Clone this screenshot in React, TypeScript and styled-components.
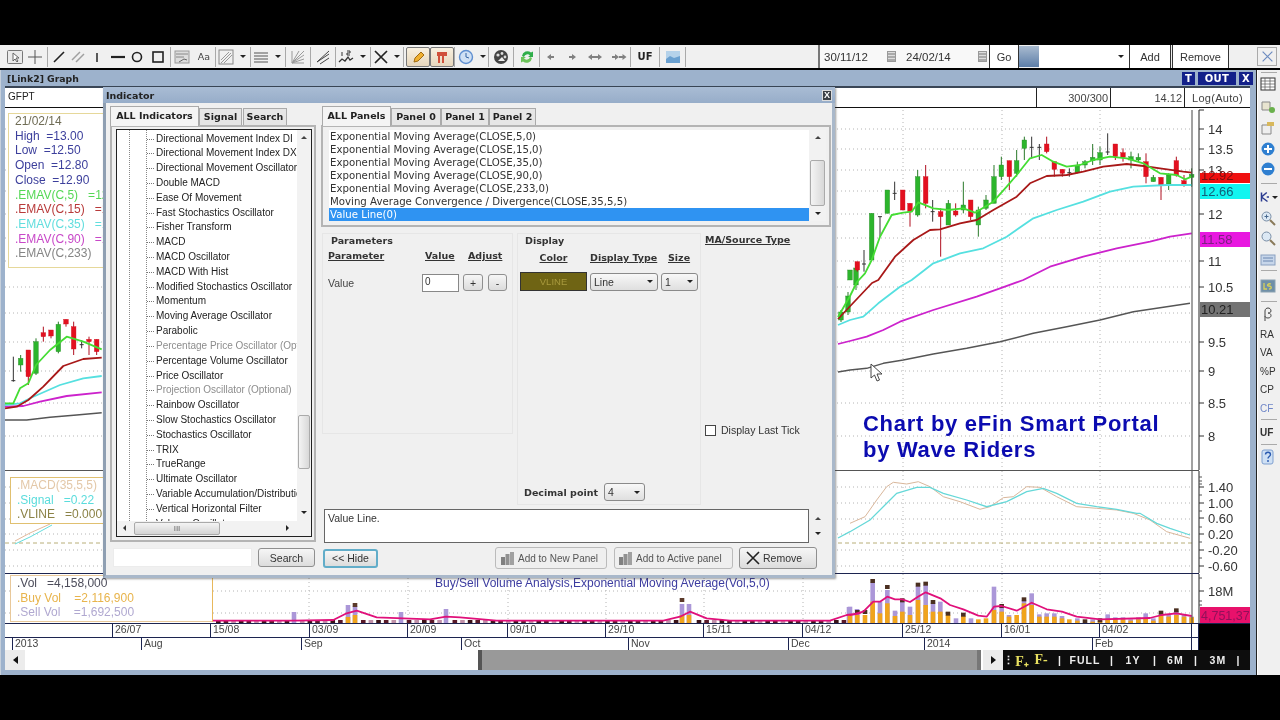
import React from 'react';
import styled, { createGlobalStyle } from 'styled-components';

const Global = createGlobalStyle`
  html, body { margin: 0; padding: 0; background: #000; }
  * { box-sizing: border-box; }
`;
const UI = `"Liberation Sans", Arial, sans-serif`;
const WIDE = `"DejaVu Sans", Verdana, sans-serif`;

const Root = styled.div`
  position: relative; width: 1280px; height: 720px; background: #000; overflow: hidden;
  display: flex; flex-direction: column; font-family: ${UI}; filter: blur(.3px);
`;
const TopBlack = styled.div`height: 45px; flex: none; background: #000;`;
const Toolbar = styled.div`
  height: 23px; flex: none; background: #f0f0f0; display: flex; align-items: center;
  padding-left: 7px; color: #333;
`;
const Tool = styled.div<{ $w: number; $boxed?: boolean }>`
  width: ${p => p.$w}px; height: 20px; flex: none; display: flex; align-items: center; justify-content: center;
  font-size: 10px;
  ${p => p.$boxed ? 'border: 1px solid #777; border-radius: 2px; background: linear-gradient(#f8f0e0,#e6d6bc);' : ''}
`;
const Sep = styled.div`width: 1px; height: 20px; flex: none; background: #a9a9a9;`;
const Caret = styled.div`
  width: 0; height: 0; border-left: 3px solid transparent; border-right: 3px solid transparent; border-top: 3px solid #222;
`;
const BoldTool = styled.span`font: bold 10px ${WIDE}; color: #222;`;
const SmallAa = styled.span`font: 9.5px ${WIDE}; color: #444;`;
const RightGroup = styled.div`display: flex; align-items: stretch; height: 23px; margin-left: auto; flex: none;`;
const DateBox = styled.div<{ $w: number; $bar?: boolean }>`
  width: ${p => p.$w}px; display: flex; align-items: center; justify-content: space-between; padding: 0 ${p => (p.$bar ? 6 : 2)}px 0 4px;
  font: 11.5px ${UI}; color: #333; background: #f8f8f8; ${p => p.$bar ? 'border-left: 2px solid #777;' : ''}
`;
const CalendarMark = styled.div`
  width: 9px; height: 11px; border: 1px solid #999; background: repeating-linear-gradient(#ddd 0 1px, #aaa 1px 3px);
`;
const TopButton = styled.div<{ $w: number }>`
  width: ${p => p.$w}px; background: #fff; border: 1px solid #333; border-width: 0 1px; height: 23px;
  display: flex; align-items: center; justify-content: center; font: 11px ${UI}; color: #333;
`;
const FolderThumb = styled.div`width: 20px; margin: 1px 0; background: linear-gradient(#a9bbd0,#5d7ea8);`;
const PickBox = styled.div`
  width: 90px; background: #fff; display: flex; align-items: center; justify-content: flex-end; padding-right: 5px;
`;
const Gap = styled.div<{ $w: number }>`width: ${p => p.$w}px; flex: none;`;
const CloseTop = styled.div`
  width: 20px; height: 19px; margin: 2px 3px 0 0; border: 1px solid #aaa; color: #6d8cc0; display: flex; align-items: center; justify-content: center;
`;

const Main = styled.div`display: flex; flex: none; height: 607px; border-top: 2px solid #000;`;
const GraphWindow = styled.div`
  width: 1256px; flex: none; background: #9db2cc; display: flex; flex-direction: column;
  padding: 0 6px 5px 5px; height: 605px;
  box-shadow: inset 1px 0 0 #c6d0dc;
`;
const GraphTitle = styled.div`
  height: 16px; flex: none; display: flex; align-items: center; justify-content: space-between; padding: 0 0 0 2px;
  font: bold 9.3px ${WIDE}; color: #222;
`;
const TitleButtons = styled.div`display: flex; gap: 3px; margin-right: -3px;`;
const NavyBtn = styled.div<{ $w: number }>`
  width: ${p => p.$w}px; height: 13px; background: #13218a; color: #fff; font: bold 10px ${WIDE};
  display: flex; align-items: center; justify-content: center; letter-spacing: .4px;
`;
const Content = styled.div`
  width: 1245px; flex: 1; background: #fff; border-top: 2px solid #3a4656; display: flex; flex-direction: column; min-height: 0;
`;
const InfoRow = styled.div`
  height: 20px; flex: none; display: flex; border-bottom: 1px solid #111; font: 11px ${UI}; color: #444; align-items: stretch;
`;
const InfoSymbol = styled.div`flex: 1; padding: 3px 0 0 3px; font-size: 10px; color: #222;`;
const InfoCell = styled.div<{ $w: number; $center?: boolean }>`
  width: ${p => p.$w}px; border-left: 1px solid #222; display: flex; align-items: center;
  justify-content: ${p => (p.$center ? 'center' : 'flex-end')}; padding: 1px 2px 0; font-size: 11px; letter-spacing: ${p => (p.$center ? '.3px' : '0')};
`;
const Pane = styled.div<{ $h: number }>`position: relative; height: ${p => p.$h}px; flex: none;`;
const ChartSvg = styled.svg`display: block; width: 100%; height: 100%;`;
const Legend = styled.div<{ $x: number; $y: number; $w: number; $h: number; $c: string }>`
  position: absolute; left: ${p => p.$x}px; top: ${p => p.$y}px; width: ${p => p.$w}px; height: ${p => p.$h}px;
  border: 1px solid ${p => p.$c}; border-right: 0; background: #fff; padding: 0 0 0 6px; white-space: nowrap; overflow: hidden;
`;
const LegendRow = styled.div<{ $c: string }>`
  font: 12px/14.7px ${UI}; color: ${p => p.$c}; white-space: pre;
`;
const Watermark = styled.div`
  position: absolute; left: 858px; top: 303px; font: bold 22px/26px ${UI}; letter-spacing: .72px; color: #0b0bb0; white-space: pre;
`;
const CursorBox = styled.div`position: absolute; left: 865px; top: 255px; width: 13px; height: 20px;`;
const VolTitle = styled.div`
  position: absolute; left: 430px; top: 2px; font: 12px ${UI}; color: #3c3ca0; white-space: pre;
`;

const AxisBlock = styled.div`display: flex; height: 27px; flex: none; border-top: 1px solid #1c2450;`;
const AxisCols = styled.div`width: 1194px; flex: none; display: flex; flex-direction: column;`;
const AxisRow = styled.div`display: flex; height: 13.5px; flex: none; border-bottom: 1px solid #1c2450; overflow: hidden;`;
const AxisCell = styled.div<{ $w: number }>`
  width: ${p => p.$w}px; flex: none; border-right: 1px solid #1c2450; font: 10.5px/11px ${UI}; color: #444; padding-left: 2px; white-space: nowrap;
`;
const BlackBlock = styled.div`flex: 1; background: #000;`;
const ScrollRow = styled.div`flex: 1; min-height: 0; display: flex; align-items: stretch;`;
const ScrollBtn = styled.div<{ $w: number }>`
  width: ${p => p.$w}px; flex: none; background: #ececec; display: flex; align-items: center; justify-content: center; font-size: 9px; color: #111;
`;
const ArrowL = styled.div`width: 0; height: 0; border: 4px solid transparent; border-right: 5px solid #111; border-left: 0;`;
const ArrowR = styled.div`width: 0; height: 0; border: 4px solid transparent; border-left: 5px solid #111; border-right: 0;`;
const ScrollTrack = styled.div`flex: none; width: 453px; background: #fff;`;
const ScrollThumb = styled.div`
  flex: none; width: 503px; background: #999; border-left: 4px solid #555; border-right: 4px solid #777;
`;
const ScrollGap = styled.div`flex: none; width: 2px; background: #fff;`;
const RangeBar = styled.div`
  flex: 1; background: #0d0d0d; color: #eee; display: flex; align-items: center; font: bold 10.5px ${UI}; letter-spacing: 1.1px;
  overflow: hidden; white-space: nowrap;
`;
const RangeItem = styled.span<{ $w: number; $y?: boolean }>`
  width: ${p => p.$w}px; flex: none; text-align: center; color: ${p => (p.$y ? '#e8e060' : '#eee')};
  ${p => p.$y ? `font: bold 14px "Liberation Serif", serif; letter-spacing: 0;` : ''}
`;

const Sidebar = styled.div`
  flex: 1; background: #f0f0f0; border-left: 1px solid #222; box-shadow: inset 1px 0 0 #fff; height: 605px;
  padding: 2px 0 0 2px; display: flex; flex-direction: column; align-items: stretch;
`;
const SideItem = styled.div<{ $h: number; $blue?: boolean; $bold?: boolean }>`
  height: ${p => p.$h}px; flex: none; display: flex; align-items: center; padding-left: 1px;
  font: ${p => (p.$bold ? 'bold ' : '')}10px ${UI}; color: ${p => (p.$blue ? '#6f86c8' : '#333')};
`;
const SideRule = styled.div<{ $mt?: number }>`height: 1px; flex: none; background: #aaa; margin: ${p => p.$mt || 0}px 3px 0 2px;`;

/* Dialog */
const Dialog = styled.div`
  position: absolute; left: 103px; top: 87px; width: 732px; height: 491px; background: #f0f0f0;
  border: 3px solid #a9b8ca; border-top: 0; border-left-color: #8f9fb2; display: flex; flex-direction: column;
  box-shadow: 1px 1px 2px rgba(60,60,60,.5);
`;
const DialogTitle = styled.div`
  height: 16px; flex: none; margin: 0 -3px; background: linear-gradient(#a9bcd4,#97adc9); display: flex; align-items: center;
  justify-content: space-between; padding: 0 3px 0 3px; font: bold 9.5px ${WIDE}; color: #222;
`;
const DialogClose = styled.div`
  width: 10px; height: 11px; background: #3a3f45; color: #fff; font: bold 9px ${UI}; display: flex; align-items: center; justify-content: center; border: 1px solid #ddd;
`;
const DialogBody = styled.div`display: flex; gap: 5px; padding: 3px 1px 0 4px; flex: 1; min-height: 0;`;
const LeftCol = styled.div`width: 206px; flex: none; display: flex; flex-direction: column;`;
const RightCol = styled.div`width: 510px; flex: none; display: flex; flex-direction: column;`;
const Tabs = styled.div<{ $ml?: number }>`display: flex; height: 19px; flex: none; align-items: flex-end; margin-left: ${p => p.$ml || 0}px;`;
const Tab = styled.div<{ $w: number; $active?: boolean }>`
  width: ${p => p.$w}px; height: ${p => (p.$active ? 20 : 17)}px; flex: none; font: bold 9.5px ${WIDE}; color: #222;
  background: ${p => (p.$active ? '#f4f4f4' : '#e6e6e6')}; border: 1px solid #aaa; border-bottom: 0;
  display: flex; align-items: center; justify-content: center; position: relative; z-index: ${p => (p.$active ? 1 : 0)};
  padding-bottom: ${p => (p.$active ? 3 : 1)}px;
  ${p => p.$active ? 'margin-bottom: -1px;' : ''}
`;
const TabPanel = styled.div`
  height: 417px; flex: none; border: 2px solid #b4b4b4; padding: 2px 2px 3px 4px;
`;
const TreeBox = styled.div`
  height: 100%; border: 1px solid #222; background: #fff; display: grid; grid-template-columns: 1fr 14px; grid-template-rows: 1fr 15px; overflow: hidden;
`;
const TreeList = styled.div`
  overflow: hidden; padding-top: 1.5px; min-height: 0;
  background:
    repeating-linear-gradient(#888 0 1px, transparent 1px 2px) 12px 0 / 1px 100% no-repeat,
    repeating-linear-gradient(#888 0 1px, transparent 1px 2px) 29px 0 / 1px 100% no-repeat;
`;
const TreeRow = styled.div<{ $off?: boolean }>`
  height: 14.82px; padding-left: 39px; position: relative; white-space: nowrap; overflow: hidden;
  font: 10px/14.82px ${UI}; color: ${p => (p.$off ? '#8d8d8d' : '#222')};
  &::before {
    content: ''; position: absolute; left: 30px; top: 7px; width: 7px; border-top: 1px dotted #777;
  }
`;
const VScroll = styled.div<{ $off: number; $thumb: number }>`
  position: relative; background: #f2f2f2;
  &::after {
    content: ''; position: absolute; left: 1px; right: 1px; top: ${p => p.$off}px; height: ${p => p.$thumb}px;
    border: 1px solid #aaa; border-radius: 2px; background: linear-gradient(90deg,#f4f4f4,#d8d8d8);
  }
`;
const ArrowUp = styled.div<{ $top: number }>`
  position: absolute; left: 50%; top: ${p => p.$top}px; margin-left: -3px; width: 0; height: 0;
  border: 3px solid transparent; border-bottom: 3px solid #444; border-top: 0;
`;
const ArrowDown = styled.div<{ $bottom: number }>`
  position: absolute; left: 50%; bottom: ${p => p.$bottom}px; margin-left: -3px; width: 0; height: 0;
  border: 3px solid transparent; border-top: 3px solid #222; border-bottom: 0;
`;
const HScroll = styled.div`position: relative; background: #f2f2f2; display: flex; align-items: center;`;
const HThumb = styled.div`
  margin-left: 17px; width: 86px; height: 13px; border: 1px solid #aaa; border-radius: 2px; background: linear-gradient(#f4f4f4,#d4d4d4);
  display: flex; align-items: center; justify-content: center; font: 8px ${UI}; color: #666;
`;
const ArrowLeftSm = styled.div`position: absolute; left: 6px; top: 4px; width: 0; height: 0; border: 3px solid transparent; border-right: 3px solid #333; border-left: 0;`;
const ArrowRightSm = styled.div`position: absolute; right: 8px; top: 4px; width: 0; height: 0; border: 3px solid transparent; border-left: 3px solid #222; border-right: 0;`;
const Corner = styled.div`background: #f2f2f2;`;
const SearchRow = styled.div`display: flex; align-items: center; margin-top: 6px; padding-left: 3px;`;
const SearchInput = styled.div`width: 139px; height: 19px; background: #fff; border: 1px solid #ececec;`;
const Btn = styled.div<{ $w: number; $h?: number; $ml?: number; $focus?: boolean; $dim?: boolean; $pl?: number }>`
  width: ${p => p.$w}px; height: ${p => p.$h || 19}px; margin-left: ${p => p.$ml || 0}px; flex: none;
  border: ${p => (p.$focus ? '2px solid #62adc9' : '1px solid ' + (p.$dim ? '#bbb' : '#8f8f8f'))}; border-radius: 3px;
  background: ${p => p.$dim ? '#efefef' : 'linear-gradient(#f6f6f6,#dcdcdc)'};
  display: flex; align-items: center; justify-content: ${p => (p.$pl ? 'flex-start' : 'center')}; gap: 2px; padding-left: ${p => p.$pl || 0}px;
  font: ${p => (p.$dim ? 10 : 10.5)}px ${UI}; color: ${p => (p.$dim ? '#555' : '#333')}; white-space: nowrap;
`;
const ListPanel = styled.div`
  height: 102px; flex: none; border: 2px solid #b4b4b4; padding: 3px 3px 4px 6px;
`;
const ListBox = styled.div`height: 91px; background: #fff; display: grid; grid-template-columns: 1fr 17px;`;
const ListRows = styled.div`overflow: hidden;`;
const ListRow = styled.div<{ $sel?: boolean }>`
  height: 13px; font: 10.2px/14px ${WIDE}; padding-left: 1px; white-space: pre;
  color: ${p => (p.$sel ? '#fff' : '#333')}; background: ${p => (p.$sel ? '#2f93f2' : 'transparent')};
`;
const Sections = styled.div`display: flex; gap: 4px; height: 272px; flex: none; margin: 6px 0 0 1px;`;
const Group = styled.div<{ $w: number; $h: number }>`
  width: ${p => p.$w}px; height: ${p => p.$h}px; flex: none; border: 1px solid #e6e6e6; display: flex; flex-direction: column;
`;
const GroupTitle = styled.div<{ $pl: number }>`
  font: bold 9.5px/13px ${WIDE}; color: #333; padding: 0 0 0 ${p => p.$pl}px; height: 13px;
`;
const HeadRow = styled.div<{ $mt: number; $pl: number }>`display: flex; margin-top: ${p => p.$mt}px; padding-left: ${p => p.$pl}px; height: 13px;`;
const Head = styled.div<{ $w: number; $center?: boolean }>`
  width: ${p => p.$w}px; flex: none; font: bold 9.5px/13px ${WIDE}; color: #333; text-decoration: underline; white-space: nowrap;
  ${p => p.$center ? 'text-align: center;' : ''}
`;
const ParamRow = styled.div<{ $mt: number; $pl: number }>`
  display: flex; align-items: center; margin-top: ${p => p.$mt}px; padding-left: ${p => p.$pl}px; height: 19px;
`;
const ParamLabel = styled.div`width: 94px; flex: none; font: 10.5px ${UI}; color: #444;`;
const ValueInput = styled.div`
  width: 37px; height: 18px; flex: none; background: #fff; border: 1px solid #888; font: 10px/14px ${UI}; color: #333; padding-left: 2px;
`;
const Swatch = styled.div`
  width: 67px; height: 19px; flex: none; background: #6f6414; border: 1px solid #333; font: 9.5px/17px ${UI}; color: #a8993d; text-align: center;
`;
const Select = styled.div<{ $w: number; $ml?: number }>`
  width: ${p => p.$w}px; height: 18px; flex: none; margin-left: ${p => p.$ml || 0}px; border: 1px solid #8a8a8a; border-radius: 3px;
  background: linear-gradient(#f8f8f8,#dfdfdf); display: flex; align-items: center; justify-content: space-between; padding: 0 4px 0 3px;
  font: 10.5px ${UI}; color: #333;
`;
const DecimalRow = styled.div`display: flex; align-items: center; margin-top: auto; padding: 0 0 3px 6px; font: bold 9.5px ${WIDE}; color: #333;`;
const DecimalLabel = styled.div`width: 80px; flex: none;`;
const MaCol = styled.div`flex: 1; display: flex; flex-direction: column;`;
const MaTitle = styled.div`font: bold 9.5px/13px ${WIDE}; color: #333; text-decoration: underline;`;
const CheckRow = styled.div`display: flex; align-items: center; gap: 5px; margin-top: 178px; font: 10.5px ${UI}; color: #333;`;
const CheckBox = styled.div`width: 11px; height: 11px; background: #fff; border: 1px solid #444;`;
const DescRow = styled.div`display: flex; margin: 4px 0 0 3px; height: 34px; flex: none;`;
const DescBox = styled.div`width: 485px; flex: none; background: #fff; border: 1px solid #666; padding: 2px 3px; font: 10.5px ${UI}; color: #333;`;
const DescScroll = styled.div`width: 17px; position: relative;`;
const ActionRow = styled.div`display: flex; align-items: center; margin: 4px 0 0 2px; height: 22px; flex: none;`;

type P = [number, number];
const map = (ox: number, oy: number, pts: P[]) => pts.map(([x, y]) => `${(ox + x / 3).toFixed(1)},${(oy + y / 3).toFixed(1)}`).join(' ');
const page = (pts: P[]) => pts.map(p => p.join(',')).join(' ');

const greenR = page([[838, 317], [850, 296], [857, 282]]) + ' ' + map(850, 40, [[45, 700], [65, 660], [90, 590], [125, 525], [160, 518], [185, 515], [205, 487], [250, 505], [295, 510], [340, 505], [375, 518], [430, 485], [470, 440], [500, 405], [540, 355], [575, 345], [610, 365], [650, 380], [690, 375], [730, 360], [780, 350], [830, 355], [880, 370], [930, 400], [980, 405], [1005, 418], [1025, 410]]);
const redR = page([[838, 319], [855, 301], [872, 283]]) + ' ' + map(850, 40, [[85, 720], [135, 650], [190, 600], [240, 570], [270, 568], [330, 550], [380, 540], [430, 510], [500, 470], [540, 430], [590, 408], [650, 405], [700, 395], [760, 380], [830, 372], [880, 378], [930, 385], [1000, 395], [1025, 398]]);
const cyanR = page([[838, 325]]) + ' ' + map(850, 280, [[0, 120], [40, 110], [85, 70], [150, 20], [185, 0]]) + ' ' + map(850, 40, [[250, 670], [330, 640], [400, 625], [470, 590], [550, 535], [620, 510], [700, 485], [780, 455], [850, 440], [950, 435], [1025, 435]]);
const magR = page([[838, 344]]) + ' ' + map(850, 280, [[0, 183], [50, 170], [100, 150], [150, 125], [250, 90], [380, 50], [450, 25], [520, 0]]) + ' ' + map(850, 40, [[600, 680], [700, 650], [800, 625], [900, 605], [960, 590], [1025, 580]]);
const grayR = page([[838, 372]]) + ' ' + map(850, 280, [[0, 270], [50, 265], [100, 250], [160, 240], [250, 222], [350, 205], [450, 185], [550, 160], [650, 140], [750, 120], [850, 95], [950, 80], [1020, 70]]);
const greenL = map(0, 280, [[15, 370], [40, 370], [60, 325], [85, 310], [108, 255], [150, 210], [200, 170], [250, 185], [305, 208]]);
const redL = map(0, 280, [[15, 385], [50, 380], [85, 360], [130, 320], [190, 258], [250, 237], [305, 233]]);
const cyanL = map(0, 280, [[15, 375], [60, 370], [100, 350], [180, 315], [250, 295], [305, 288]]);
const magL = map(0, 280, [[15, 380], [70, 378], [120, 365], [200, 348], [305, 337]]);
const grayL = map(0, 280, [[15, 420], [80, 420], [150, 412], [230, 405], [305, 398]]);

type C = [number, number, number, number, number, 'g' | 'r' | 'k'];
const candlesR: C[] = [
  [0, 690, 720, 690, 720, 'g'], [22, 665, 695, 665, 690, 'r'], [42, 630, 695, 672, 675, 'k'],
  [65, 520, 660, 520, 660, 'g'], [90, 530, 590, 530, 532, 'k'], [112, 450, 520, 450, 520, 'g'], [134, 425, 480, 460, 463, 'k'],
  [158, 450, 510, 450, 510, 'r'], [180, 490, 560, 490, 515, 'r'], [203, 390, 530, 410, 525, 'g'], [227, 375, 505, 410, 490, 'r'],
  [248, 480, 545, 515, 518, 'k'], [272, 505, 650, 515, 530, 'r'], [295, 480, 555, 490, 555, 'g'], [317, 490, 530, 513, 525, 'r'],
  [340, 425, 520, 495, 510, 'g'], [362, 480, 540, 480, 530, 'r'], [385, 500, 590, 510, 555, 'g'], [408, 465, 510, 480, 505, 'g'],
  [432, 375, 490, 410, 490, 'g'], [454, 350, 420, 375, 410, 'g'], [478, 362, 450, 362, 410, 'r'], [500, 330, 410, 362, 400, 'g'],
  [523, 290, 360, 300, 325, 'g'], [545, 290, 355, 322, 325, 'k'], [568, 312, 360, 322, 325, 'k'], [590, 290, 340, 312, 335, 'r'],
  [613, 365, 410, 365, 388, 'r'], [637, 388, 410, 388, 400, 'r'], [658, 385, 410, 398, 401, 'k'], [682, 365, 400, 378, 398, 'g'],
  [705, 360, 385, 365, 375, 'g'], [728, 312, 375, 352, 362, 'g'], [750, 320, 375, 338, 360, 'g'], [773, 280, 345, 336, 339, 'k'],
  [796, 312, 360, 312, 350, 'r'], [819, 325, 365, 338, 352, 'r'], [843, 335, 385, 350, 360, 'g'], [865, 340, 365, 352, 360, 'g'],
  [888, 340, 430, 365, 410, 'r'], [910, 405, 425, 412, 425, 'g'], [933, 412, 480, 412, 435, 'r'], [956, 400, 450, 405, 432, 'g'],
  [979, 350, 410, 362, 405, 'r'], [1002, 405, 440, 422, 432, 'r'], [1025, 385, 440, 403, 412, 'g'],
];
const candlesFar: C[] = [
  [841, 310, 322, 312, 320, 'g'], [848, 292, 315, 296, 312, 'g'], [856, 262, 290, 268, 285, 'g'],
];
const candlesL: C[] = [
  [40, 230, 305, 302, 305, 'k'], [62, 225, 275, 235, 255, 'g'], [85, 210, 315, 210, 290, 'r'], [108, 175, 285, 185, 280, 'g'],
  [130, 140, 185, 158, 170, 'r'], [153, 150, 175, 150, 168, 'r'], [175, 125, 220, 133, 215, 'g'], [198, 118, 140, 118, 132, 'r'],
  [221, 125, 225, 140, 207, 'r'], [245, 180, 205, 194, 197, 'k'], [267, 170, 225, 178, 185, 'r'], [290, 178, 225, 178, 215, 'r'],
];
const Candle: React.FC<{ c: C; ox: number; oy: number }> = ({ c, ox, oy }) => {
  const [x0, wt, wb, bt, bb, k] = c;
  const x = ox + x0 / 3;
  const col = k === 'g' ? '#2cb52c' : k === 'r' ? '#e3101f' : '#222';
  const wick = k === 'g' ? '#2a7a2a' : k === 'r' ? '#b01020' : '#333';
  return (
    <g>
      <line x1={x} x2={x} y1={oy + wt / 3} y2={oy + wb / 3} stroke={wick} strokeWidth={1} />
      {k === 'k'
        ? <line x1={x - 2} x2={x + 2} y1={oy + bt / 3} y2={oy + bt / 3} stroke="#333" />
        : <rect x={x - 2.3} y={oy + bt / 3} width={4.6} height={Math.max(1, (bb - bt) / 3)} fill={col} stroke={k === 'g' ? '#2a8a2a' : '#d01020'} strokeWidth={.4} />}
    </g>
  );
};
const Grid: React.FC<{ ys: number[]; y1: number; y2: number; xs: number[] }> = ({ ys, y1, y2, xs }) => (
  <g stroke="#b4b4b4" strokeDasharray="1 3">
    {ys.map(y => <line key={y} x1={5} x2={1192} y1={y} y2={y} />)}
    {xs.map(x => <line key={x} x1={x} x2={x} y1={y1} y2={y2} />)}
  </g>
);
const Line: React.FC<{ pts: string; c: string; w?: number }> = ({ pts, c, w = 1.8 }) => (
  <polyline points={pts} fill="none" stroke={c} strokeWidth={w} strokeLinejoin="round" />
);
const Tag: React.FC<{ y: number; h: number; bg: string; fg: string; t: string; fs?: number }> = ({ y, h, bg, fg, t, fs = 13 }) => (
  <g>
    <rect x={1200} y={y} width={50} height={h} fill={bg} />
    <text x={1201} y={y + h - 3} fontSize={fs} fill={fg} fontFamily={UI}>{t}</text>
  </g>
);
const Tick: React.FC<{ y: number; t: string }> = ({ y, t }) => (
  <g>
    <line x1={1199} x2={1204} y1={y} y2={y} stroke="#333" />
    <text x={1208} y={y + 4.5} fontSize={13} fill="#333" fontFamily={UI}>{t}</text>
  </g>
);

const PricePane = () => (
  <ChartSvg viewBox="5 108 1245 363" preserveAspectRatio="none">
    <Grid ys={[129, 149, 170, 191, 214, 238, 261, 287, 313, 342, 371, 403, 436]} y1={110} y2={470} xs={[903, 1002, 1100]} />
    {candlesL.map((c, i) => <Candle key={i} c={c} ox={0} oy={280} />)}
    <Line pts={grayL} c="#555" w={1.4} />
    <Line pts={magL} c="#cc22cc" />
    <Line pts={cyanL} c="#55e0e0" />
    <Line pts={redL} c="#a81818" />
    <Line pts={greenL} c="#44dd33" />
    {candlesFar.map((c, i) => <Candle key={'f' + i} c={[(c[0] - 838) * 3, (c[1] - 40) * 3, (c[2] - 40) * 3, (c[3] - 40) * 3, (c[4] - 40) * 3, c[5]]} ox={838} oy={40} />)}
    {candlesR.map((c, i) => <Candle key={i} c={c} ox={850} oy={40} />)}
    <Line pts={grayR} c="#555" w={1.4} />
    <Line pts={magR} c="#cc22cc" />
    <Line pts={cyanR} c="#55e0e0" />
    <Line pts={redR} c="#a81818" />
    <Line pts={greenR} c="#44dd33" />
    <line x1={1192} x2={1192} y1={110} y2={470} stroke="#444" />
    <line x1={1199} x2={1199} y1={110} y2={470} stroke="#222" />
    <line x1={1199} x2={1204} y1={110} y2={110} stroke="#333" />
    {[['14', 129], ['13.5', 149], ['13', 170], ['12', 214], ['11', 261], ['10.5', 287], ['9.5', 342], ['9', 371], ['8.5', 403], ['8', 436]].map(([t, y]) => <Tick key={t as string} y={y as number} t={t as string} />)}
    <Tag y={173} h={10} bg="#f01010" fg="#7a1010" t="12.92" />
    <Tag y={184} h={15} bg="#12f5f0" fg="#11607a" t="12.66" />
    <Tag y={232} h={15} bg="#e818e0" fg="#7a2080" t="11.58" />
    <Tag y={302} h={15} bg="#737373" fg="#222" t="10.21" />
    <line x1={5} x2={1199} y1={470.5} y2={470.5} stroke="#555" />
  </ChartSvg>
);

const tanR = map(850, 500, [[0, 70], [45, 50], [80, 0]]) + ' ' + map(850, 280, [[110, 620], [130, 607], [170, 612], [205, 605], [240, 620], [280, 650], [330, 665], [390, 688], [420, 680], [460, 653], [490, 650], [530, 620], [570, 622], [620, 650], [680, 680], [740, 685], [800, 690], [850, 700], [900, 720]]) + ' ' + map(850, 500, [[950, 95], [1020, 115]]);
const cyMacd = page([[838, 538]]) + ' ' + map(850, 500, [[0, 95], [60, 60], [120, 0]]) + ' ' + map(850, 280, [[140, 640], [200, 622], [240, 622], [280, 640], [350, 660], [410, 680], [470, 665], [530, 635], [580, 625], [620, 640], [680, 670], [740, 680], [800, 688], [860, 700]]) + ' ' + map(850, 500, [[870, 40], [920, 70], [960, 85], [1020, 105]]);

const MacdPane = () => (
  <ChartSvg viewBox="5 471 1245 103" preserveAspectRatio="none">
    <Grid ys={[487, 503, 519, 534, 550, 566]} y1={471} y2={573} xs={[903, 1002, 1100]} />
    <line x1={5} x2={1192} y1={543} y2={543} stroke="#b8ae78" strokeDasharray="4 3" />
    <polyline points="15,541 30,533 50,524" fill="none" stroke="#e3b99b" />
    <polyline points="15,544 30,537 52,525" fill="none" stroke="#66dddd" />
    <polyline points={tanR} fill="none" stroke="#d9b79b" />
    <polyline points={cyMacd} fill="none" stroke="#66d8d8" strokeWidth={1.3} />
    <line x1={1192} x2={1192} y1={471} y2={573} stroke="#444" />
    <line x1={1199} x2={1199} y1={471} y2={573} stroke="#222" />
    {[477, 481, 484, 495, 511, 527, 542, 558].map(y => <line key={y} x1={1199} x2={1202} y1={y} y2={y} stroke="#555" />)}
    {[['1.40', 487], ['1.00', 503], ['0.60', 518], ['0.20', 534], ['-0.20', 550], ['-0.60', 566]].map(([t, y]) => <Tick key={t as string} y={y as number} t={t as string} />)}
    <line x1={5} x2={1199} y1={573.5} y2={573.5} stroke="#1c2450" />
  </ChartSvg>
);

type V = [number, number, number?, number?];
const volR: V[] = [[0, 345, 320], [22, 345, 0, 330], [45, 345, 0, 330], [68, 305, 248, 237], [90, 340, 305], [112, 310, 270, 255], [135, 348, 332], [157, 335, 305, 295], [180, 345, 320], [204, 300, 258, 248], [227, 315, 255, 245], [249, 335, 308, 300], [271, 335, 305], [294, 345, 0, 335], [318, 0, 355], [340, 348, 0, 338], [363, 0, 355], [385, 358], [408, 355], [432, 330, 260], [455, 335, 320, 312], [477, 350, 345], [500, 345], [522, 310, 300, 292], [545, 315, 280], [568, 350, 343], [590, 350, 340], [613, 350, 340], [636, 355, 348], [658, 358], [682, 362, 355], [705, 0, 0, 358], [728, 365, 358], [750, 362, 0, 355], [773, 358, 343], [796, 358, 352], [819, 358, 352], [842, 362, 358], [865, 358, 352], [887, 355, 340], [910, 362, 355], [933, 345, 340, 332], [956, 350, 345], [979, 345, 333, 325], [1002, 350, 345], [1025, 352, 350]];
const specials: [number, number, number?, number?][] = [
  [294, 0, 612], [348, 617, 605, 0], [355, 615, 606, 603], [401, 0, 612], [446, 0, 609], [682, 615, 604, 598], [689, 615, 604], [849, 0, 607], [857, 0, 609, 0],
];
const lowBars: number[] = [];
for (let x = 216; x < 848; x += 7.63) lowBars.push(x);
const pinkLine = map(210, 500, [[0, 362]]) + ' ' + map(0, 500, [[880, 362], [1000, 360], [1040, 340], [1070, 332], [1130, 352], [1290, 358]]) + ' ' + map(430, 500, [[48, 350], [90, 352], [200, 362], [700, 362], [750, 350], [780, 335], [830, 355], [900, 362], [1200, 362], [1250, 345], [1290, 340]]) + ' ' + map(850, 500, [[0, 345], [40, 335], [70, 305], [90, 305], [112, 290], [135, 298], [157, 298], [180, 306], [204, 290], [227, 277], [271, 295], [300, 315], [340, 328], [385, 347], [410, 350], [432, 320], [455, 318], [500, 332], [545, 308], [590, 328], [636, 335], [680, 350], [750, 358], [900, 354], [935, 345], [979, 340], [1025, 348]]);

const VolPane = () => (
  <ChartSvg viewBox="5 574 1245 49" preserveAspectRatio="none">
    <Grid ys={[591, 613]} y1={574} y2={623} xs={[309, 408, 508, 606, 704, 803, 903, 1002, 1100]} />
    {lowBars.map((x, i) => {
      const specialHit = specials.some(s => Math.abs(s[0] - x) < 3.8);
      if (specialHit) return null;
      const c = i % 3 === 0 ? '#3b1218' : i % 3 === 1 ? '#5a1a2a' : '#c090a8';
      return <rect key={i} x={x} y={620} width={4.6} height={3} fill={c} />;
    })}
    {specials.map(([x, o, p, d], i) => (
      <g key={i}>
        {!!p && <rect x={x - 2.3} y={p} width={4.6} height={623 - p} fill="#ab97d8" />}
        {!!o && <rect x={x - 2.3} y={o} width={4.6} height={623 - o} fill="#f0a41c" />}
        {!!d && <rect x={x - 2.3} y={d} width={4.6} height={4} fill="#5b3a2a" />}
      </g>
    ))}
    {volR.map(([zx, o, p, d], i) => {
      const x = 850 + zx / 3 - 2.3;
      const Y = (z: number) => 500 + z / 3;
      return (
        <g key={i}>
          {!!p && <rect x={x} y={Y(p)} width={4.6} height={623 - Y(p)} fill="#ab97d8" />}
          {!!o && <rect x={x} y={Y(o)} width={4.6} height={623 - Y(o)} fill="#f0a41c" />}
          {!!d && <rect x={x} y={Y(d)} width={4.6} height={4} fill="#4a2f20" />}
        </g>
      );
    })}
    <polyline points={pinkLine} fill="none" stroke="#e0107a" strokeWidth={1.8} strokeLinejoin="round" />
    <line x1={212.5} x2={212.5} y1={574} y2={622} stroke="#e8b85c" />
    <line x1={1192} x2={1192} y1={574} y2={623} stroke="#444" />
    <line x1={1199} x2={1199} y1={574} y2={623} stroke="#222" />
    {[578, 601, 605].map(y => <line key={y} x1={1199} x2={1202} y1={y} y2={y} stroke="#555" />)}
    <Tick y={591} t="18M" />
    <Tag y={607} h={16} bg="#e8116b" fg="#92105a" t="4,751,379" fs={12.5} />
  </ChartSvg>
);

const Ico: React.FC<{ children: React.ReactNode; s?: number }> = ({ children, s = 16 }) => (
  <svg width={s} height={s} viewBox="0 0 16 16" fill="none">{children}</svg>
);

const toolbarItems: React.ReactNode[] = [
  <Tool $w={16} key="select"><Ico><rect x=".5" y="1.5" width="15" height="13" rx="1" stroke="#777" fill="#eaeaea" /><path d="M6 4l0 8 2-2 2 3 1-1-2-3 3 0z" stroke="#666" fill="#fff" /></Ico></Tool>,
  <Tool $w={24} key="plus"><Ico><path d="M8 1v14M1 8h14" stroke="#555" /></Ico></Tool>,
  <Sep key="s1" />,
  <Tool $w={22} key="diag"><Ico><path d="M3 13L13 3" stroke="#222" strokeWidth="1.6" /></Ico></Tool>,
  <Tool $w={16} key="dbl"><Ico><path d="M2 11L10 3M6 13l8-8" stroke="#a0a0a0" strokeWidth="1.5" /></Ico></Tool>,
  <Tool $w={22} key="bar"><Ico><path d="M8 4v9" stroke="#333" strokeWidth="1.6" /></Ico></Tool>,
  <Tool $w={20} key="thick"><Ico><path d="M1 8h14" stroke="#222" strokeWidth="2.2" /></Ico></Tool>,
  <Tool $w={18} key="circ"><Ico><circle cx="8" cy="8" r="4.5" stroke="#222" strokeWidth="1.6" /></Ico></Tool>,
  <Tool $w={24} key="sq"><Ico><rect x="3" y="3" width="10" height="10" stroke="#222" strokeWidth="1.6" /></Ico></Tool>,
  <Sep key="s2" />,
  <Tool $w={22} key="note"><Ico><rect x="1" y="2" width="14" height="12" fill="#ddd" stroke="#999" /><path d="M2 5h12M2 8h8" stroke="#888" /><path d="M5 13l5-3 3 1" stroke="#666" /></Ico></Tool>,
  <Tool $w={22} key="aa"><SmallAa>Aa</SmallAa></Tool>,
  <Sep key="s3" />,
  <Tool $w={20} key="pat"><Ico><rect x="1" y="1" width="14" height="14" stroke="#888" /><path d="M3 11l8-8M3 14l10-10M6 14l8-8" stroke="#999" /></Ico></Tool>,
  <Tool $w={14} key="c1"><Caret /></Tool>,
  <Sep key="s4" />,
  <Tool $w={20} key="lines"><Ico><path d="M1 4h14M1 7h14M1 10h14M1 13h14" stroke="#555" /></Ico></Tool>,
  <Tool $w={14} key="c2"><Caret /></Tool>,
  <Sep key="s5" />,
  <Tool $w={24} key="fan"><Ico><path d="M2 14L14 2M2 14L14 6M2 14L14 10M2 14L9 2" stroke="#9a9a9a" /><path d="M2 2v12h12" stroke="#999" /></Ico></Tool>,
  <Sep key="s6" />,
  <Tool $w={24} key="fan2"><Ico><path d="M2 13L14 2M2 13L14 5M5 15L14 9" stroke="#444" /></Ico></Tool>,
  <Sep key="s7" />,
  <Tool $w={20} key="wave"><Ico><path d="M1 13l3-3 3 2 3-4 2 3 3-2" stroke="#333" strokeWidth="1.3" /><path d="M4 3v4M9 2h3v2h-3v2h3" stroke="#333" /></Ico></Tool>,
  <Tool $w={14} key="c3"><Caret /></Tool>,
  <Sep key="s8" />,
  <Tool $w={20} key="x"><Ico><path d="M2 2l12 12M14 2L2 14" stroke="#222" strokeWidth="1.7" /></Ico></Tool>,
  <Tool $w={12} key="c4"><Caret /></Tool>,
  <Sep key="s9" />,
  <Gap $w={2} key="g1" />,
  <Tool $w={24} $boxed key="pen"><Ico><path d="M4 13l1-4 6-6 3 3-6 6z" fill="#f0b030" stroke="#a06a10" /></Ico></Tool>,
  <Tool $w={24} $boxed key="red"><Ico><path d="M3 3h10v4h-3v7H8V7H6v7H4V7H3z" fill="#d0503a" /></Ico></Tool>,
  <Sep key="s10" />,
  <Tool $w={22} key="clock"><Ico><circle cx="8" cy="8" r="6.5" fill="#cfe0f4" stroke="#5f8fd0" strokeWidth="1.4" /><path d="M8 4v4l3 1" stroke="#3565a5" /></Ico></Tool>,
  <Tool $w={11} key="c5"><Caret /></Tool>,
  <Sep key="s11" />,
  <Tool $w={24} key="palette"><Ico><circle cx="8" cy="8" r="7" fill="#444" /><circle cx="5" cy="6" r="1.6" fill="#ddd" /><circle cx="9" cy="4.5" r="1.4" fill="#ddd" /><circle cx="12" cy="8" r="1.4" fill="#ddd" /><path d="M5 12l4-4 3 4z" fill="#eee" /></Ico></Tool>,
  <Sep key="s12" />,
  <Tool $w={25} key="recycle"><Ico><path d="M3 7a5.5 5.5 0 0 1 9-3.5l2-1v5.5H9l2-1.6A3.5 3.5 0 0 0 5 8z" fill="#2fae4a" /><path d="M13 9a5.5 5.5 0 0 1-9 3.5l-2 1V8h5l-2 1.6A3.5 3.5 0 0 0 11 8z" fill="#6cc35a" /></Ico></Tool>,
  <Sep key="s13" />,
  <Tool $w={22} key="a1"><Ico><path d="M4 8l4-3v2h3v2H8v2z" fill="#808080" /></Ico></Tool>,
  <Tool $w={20} key="a2"><Ico><path d="M12 8L8 5v2H5v2h3v2z" fill="#808080" /></Ico></Tool>,
  <Tool $w={26} key="a3"><Ico><path d="M1 8l4-3v2h6V5l4 3-4 3V9H5v2z" fill="#808080" /></Ico></Tool>,
  <Tool $w={22} key="a4"><Ico><path d="M8 8L4 5v2H1v2h3v2zM15.5 8l-4-3v2H8v2h3.5v2z" fill="#808080" /></Ico></Tool>,
  <Sep key="s14" />,
  <Tool $w={28} key="uf"><BoldTool>UF</BoldTool></Tool>,
  <Sep key="s15" />,
  <Tool $w={25} key="pic"><Ico><rect x="1" y="2" width="14" height="12" fill="#b5d2ea" /><path d="M1 10l4-3 4 2 6-2v7H1z" fill="#6aa0d0" /></Ico></Tool>,
  <Sep key="s16" />,
];

const dateCells: [number, string][] = [[108, ''], [98, '26/07'], [99, '15/08'], [98, '03/09'], [100, '20/09'], [98, '09/10'], [98, '29/10'], [99, '15/11'], [100, '04/12'], [99, '25/12'], [98, '16/01'], [92, '04/02'], [7, '']];
const monthCells: [number, string][] = [[8, ''], [129, '2013'], [160, 'Aug'], [160, 'Sep'], [167, 'Oct'], [160, 'Nov'], [136, 'Dec'], [168, '2014'], [99, 'Feb'], [7, '']];

const treeItems: [string, boolean?][] = [
  ['Directional Movement Index DI'], ['Directional Movement Index DX'], ['Directional Movement Oscillator'], ['Double MACD'], ['Ease Of Movement'],
  ['Fast Stochastics Oscillator'], ['Fisher Transform'], ['MACD'], ['MACD Oscillator'], ['MACD With Hist'], ['Modified Stochastics Oscillator'], ['Momentum'],
  ['Moving Average Oscillator'], ['Parabolic'], ['Percentage Price Oscillator (Optional)', true], ['Percentage Volume Oscillator'], ['Price Oscillator'],
  ['Projection Oscillator (Optional)', true], ['Rainbow Oscillator'], ['Slow Stochastics Oscillator'], ['Stochastics Oscillator'], ['TRIX'], ['TrueRange'],
  ['Ultimate Oscillator'], ['Variable Accumulation/Distribution'], ['Vertical Horizontal Filter'], ['Volume Oscillator'],
];
const panelRows = ['Exponential Moving Average(CLOSE,5,0)', 'Exponential Moving Average(CLOSE,15,0)', 'Exponential Moving Average(CLOSE,35,0)', 'Exponential Moving Average(CLOSE,90,0)', 'Exponential Moving Average(CLOSE,233,0)', 'Moving Average Convergence / Divergence(CLOSE,35,5,5)'];

const GrayBars = () => <Ico><rect x="1" y="7" width="4" height="8" fill="#808080" /><rect x="5.5" y="4" width="4" height="11" fill="#909090" /><rect x="10" y="2" width="4" height="13" fill="#a0a0a0" /></Ico>;

export default function App() {
  return (
    <Root>
      <Global />
      <TopBlack />
      <Toolbar>
        {toolbarItems}
        <RightGroup>
          <DateBox $w={84} $bar>30/11/12<CalendarMark /></DateBox>
          <DateBox $w={87}>24/02/14<CalendarMark /></DateBox>
          <TopButton $w={30}>Go</TopButton>
          <FolderThumb />
          <PickBox><Caret /></PickBox>
          <TopButton $w={42}>Add</TopButton>
          <Gap $w={1} />
          <TopButton $w={57}>Remove</TopButton>
          <Gap $w={28} />
          <CloseTop><Ico s={13}><path d="M2 2l12 12M14 2L2 14" stroke="#6d8cc0" strokeWidth="1.5" /></Ico></CloseTop>
        </RightGroup>
      </Toolbar>
      <Main>
        <GraphWindow>
          <GraphTitle>
            [Link2] Graph
            <TitleButtons>
              <NavyBtn $w={13}>T</NavyBtn>
              <NavyBtn $w={38}>OUT</NavyBtn>
              <NavyBtn $w={14}>X</NavyBtn>
            </TitleButtons>
          </GraphTitle>
          <Content>
            <InfoRow>
              <InfoSymbol>GFPT</InfoSymbol>
              <InfoCell $w={74}>300/300</InfoCell>
              <InfoCell $w={74}>14.12</InfoCell>
              <InfoCell $w={66} $center>Log(Auto)</InfoCell>
            </InfoRow>
            <Pane $h={363}>
              <PricePane />
              <Legend $x={3} $y={5} $w={95} $h={155} $c="#e6d89a">
                <LegendRow $c="#6f6c55">21/02/14</LegendRow>
                <LegendRow $c="#3c3f9c">High  =13.00</LegendRow>
                <LegendRow $c="#3c3f9c">Low  =12.50</LegendRow>
                <LegendRow $c="#3c3f9c">Open  =12.80</LegendRow>
                <LegendRow $c="#3c3f9c">Close  =12.90</LegendRow>
                <LegendRow $c="#55d855">.EMAV(C,5)   =12</LegendRow>
                <LegendRow $c="#b83a3a">.EMAV(C,15)   =12</LegendRow>
                <LegendRow $c="#62dede">.EMAV(C,35)   =12</LegendRow>
                <LegendRow $c="#c848c8">.EMAV(C,90)   =11</LegendRow>
                <LegendRow $c="#858585">.EMAV(C,233)</LegendRow>
              </Legend>
              <Watermark>{'Chart by eFin Smart Portal\nby Wave Riders'}</Watermark>
              <CursorBox>
                <svg width="13" height="20" viewBox="0 0 13 20"><path d="M1 1v14l3.5-3 2.5 6 2.5-1-2.5-6h5z" fill="#fff" stroke="#333" strokeWidth=".9" /></svg>
              </CursorBox>
            </Pane>
            <Pane $h={103}>
              <MacdPane />
              <Legend $x={5} $y={6} $w={95} $h={47} $c="#e0c070">
                <LegendRow $c="#e3c8a8">.MACD(35,5,5)</LegendRow>
                <LegendRow $c="#5adcdc">.Signal   =0.22</LegendRow>
                <LegendRow $c="#8b8246">.VLINE   =0.000</LegendRow>
              </Legend>
            </Pane>
            <Pane $h={49}>
              <VolPane />
              <Legend $x={5} $y={1} $w={202} $h={47} $c="#e8c89a">
                <LegendRow $c="#4c4c5a">.Vol   =4,158,000</LegendRow>
                <LegendRow $c="#e8b44c">.Buy Vol    =2,116,900</LegendRow>
                <LegendRow $c="#b0a8d0">.Sell Vol    =1,692,500</LegendRow>
              </Legend>
              <VolTitle>Buy/Sell Volume Analysis,Exponential Moving Average(Vol,5,0)</VolTitle>
            </Pane>
            <AxisBlock>
              <AxisCols>
                <AxisRow>{dateCells.map(([w, t], i) => <AxisCell key={i} $w={w}>{t}</AxisCell>)}</AxisRow>
                <AxisRow>{monthCells.map(([w, t], i) => <AxisCell key={i} $w={w}>{t}</AxisCell>)}</AxisRow>
              </AxisCols>
              <BlackBlock />
            </AxisBlock>
            <ScrollRow>
              <ScrollBtn $w={20}><ArrowL /></ScrollBtn>
              <ScrollTrack />
              <ScrollThumb />
              <ScrollGap />
              <ScrollBtn $w={20}><ArrowR /></ScrollBtn>
              <RangeBar>
                <RangeItem $w={10}>⋮</RangeItem>
                <RangeItem $w={18} $y>F₊</RangeItem>
                <RangeItem $w={20} $y>F-</RangeItem>
                <RangeItem $w={18}>|</RangeItem>
                <RangeItem $w={32}>FULL</RangeItem>
                <RangeItem $w={22}>|</RangeItem>
                <RangeItem $w={20}>1Y</RangeItem>
                <RangeItem $w={24}>|</RangeItem>
                <RangeItem $w={16}>6M</RangeItem>
                <RangeItem $w={26}>|</RangeItem>
                <RangeItem $w={18}>3M</RangeItem>
                <RangeItem $w={23}>|</RangeItem>
              </RangeBar>
            </ScrollRow>
          </Content>
        </GraphWindow>
        <Sidebar>
          <SideRule />
          <SideItem $h={22}><Ico><rect x="1" y="2" width="14" height="12" fill="#fff" stroke="#333" /><path d="M1 5h14M1 8h14M1 11h14M5 2v12M10 2v12" stroke="#555" strokeWidth=".7" /></Ico></SideItem>
          <SideItem $h={23}><Ico><path d="M2 3h8v8H2z" fill="#e8e4d0" stroke="#888" /><circle cx="12" cy="11" r="3" fill="#6ab04c" /></Ico></SideItem>
          <SideItem $h={19}><Ico><path d="M2 5h9v9H2z" fill="#eee" stroke="#888" /><path d="M7 2h7v4H7z" fill="#d8b85c" /></Ico></SideItem>
          <SideItem $h={23}><Ico><circle cx="8" cy="8" r="6.5" fill="#2f7fd0" /><path d="M4 8h8M8 4v8" stroke="#fff" strokeWidth="2" /></Ico></SideItem>
          <SideItem $h={18}><Ico><circle cx="8" cy="8" r="6.5" fill="#2f7fd0" /><path d="M4 8h8" stroke="#fff" strokeWidth="2" /></Ico></SideItem>
          <SideRule $mt={5} />
          <SideItem $h={26}><Ico s={12}><path d="M2 2v12M2 8l7-6M2 8l8 6M9 8h3" stroke="#2c3c90" strokeWidth="2" /></Ico><Caret /></SideItem>
          <SideItem $h={16}><Ico><circle cx="6.5" cy="6.5" r="4.5" fill="#dce8f4" stroke="#7a8ea6" /><path d="M10 10l5 5" stroke="#8a7a5a" strokeWidth="2" /><path d="M4.5 6.5h4M6.5 4.5v4" stroke="#4a6a90" /></Ico></SideItem>
          <SideItem $h={24}><Ico><circle cx="6.5" cy="6.5" r="4.5" fill="#dce8f4" stroke="#7a8ea6" /><path d="M10 10l5 5" stroke="#8a7a5a" strokeWidth="2" /></Ico></SideItem>
          <SideItem $h={20}><Ico><rect x="1" y="3" width="14" height="10" fill="#c7d6ea" stroke="#8aa0c0" /><path d="M3 6h10M3 9h10" stroke="#6a86b0" /></Ico></SideItem>
          <SideRule />
          <SideItem $h={30}><Ico><rect x="1" y="2" width="14" height="12" fill="#6f8fa8" stroke="#8aa0b0" /><path d="M4 5v6h3M9 11c3 0 3-3 0-3s-1-3 2-2" stroke="#d8d05a" strokeWidth="1.3" /></Ico></SideItem>
          <SideRule />
          <SideItem $h={24}><Ico><path d="M5 15V5c0-4 6-4 6 0 0 2-3 2-3 2 4 0 4 5 0 5-2 0-3-1-3-2" stroke="#444" strokeWidth="1" /></Ico></SideItem>
          <SideItem $h={16}>RA</SideItem>
          <SideItem $h={20}>VA</SideItem>
          <SideItem $h={18}>%P</SideItem>
          <SideItem $h={18}>CP</SideItem>
          <SideItem $h={20} $blue>CF</SideItem>
          <SideRule $mt={1} />
          <SideItem $h={24} $bold>UF</SideItem>
          <SideRule />
          <SideItem $h={24}><Ico><rect x="2" y="1" width="11" height="14" rx="2" fill="#cfe0f4" stroke="#7fa0d0" /><path d="M5.5 5.5c0-3 5-3 5 0 0 2-2.5 2-2.5 4M8 11v2" stroke="#2a5ab0" strokeWidth="1.4" /></Ico></SideItem>
        </Sidebar>
      </Main>
      <Dialog>
        <DialogTitle>Indicator<DialogClose>X</DialogClose></DialogTitle>
        <DialogBody>
          <LeftCol>
            <Tabs>
              <Tab $w={89} $active>ALL Indicators</Tab>
              <Tab $w={43}>Signal</Tab>
              <Gap $w={1} />
              <Tab $w={44}>Search</Tab>
            </Tabs>
            <TabPanel>
              <TreeBox>
                <TreeList>
                  {treeItems.map(([t, off]) => <TreeRow key={t} $off={off}>{t}</TreeRow>)}
                </TreeList>
                <VScroll $off={285} $thumb={52}>
                  <ArrowUp $top={6} />
                  <ArrowDown $bottom={7} />
                </VScroll>
                <HScroll>
                  <ArrowLeftSm />
                  <HThumb>III</HThumb>
                  <ArrowRightSm />
                </HScroll>
                <Corner />
              </TreeBox>
            </TabPanel>
            <SearchRow>
              <SearchInput />
              <Btn $w={57} $ml={6}>Search</Btn>
            </SearchRow>
          </LeftCol>
          <RightCol>
            <Tabs $ml={1}>
              <Tab $w={69} $active>ALL Panels</Tab>
              <Tab $w={50}>Panel 0</Tab>
              <Tab $w={48}>Panel 1</Tab>
              <Tab $w={47}>Panel 2</Tab>
            </Tabs>
            <ListPanel>
              <ListBox>
                <ListRows>
                  {panelRows.map(t => <ListRow key={t}>{t}</ListRow>)}
                  <ListRow $sel>Value Line(0)</ListRow>
                </ListRows>
                <VScroll $off={30} $thumb={44}>
                  <ArrowUp $top={6} />
                  <ArrowDown $bottom={6} />
                </VScroll>
              </ListBox>
            </ListPanel>
            <Sections>
              <Group $w={191} $h={201}>
                <GroupTitle $pl={8}>Parameters</GroupTitle>
                <HeadRow $mt={2} $pl={5}>
                  <Head $w={97}>Parameter</Head>
                  <Head $w={43}>Value</Head>
                  <Head $w={44}>Adjust</Head>
                </HeadRow>
                <ParamRow $mt={11} $pl={5}>
                  <ParamLabel>Value</ParamLabel>
                  <ValueInput>0</ValueInput>
                  <Btn $w={20} $h={17} $ml={4}>+</Btn>
                  <Btn $w={19} $h={17} $ml={5}>-</Btn>
                </ParamRow>
              </Group>
              <Group $w={184} $h={272}>
                <GroupTitle $pl={7}>Display</GroupTitle>
                <HeadRow $mt={4} $pl={2}>
                  <Head $w={67} $center>Color</Head>
                  <Gap $w={3} />
                  <Head $w={78}>Display Type</Head>
                  <Head $w={30}>Size</Head>
                </HeadRow>
                <ParamRow $mt={8} $pl={2}>
                  <Swatch>VLINE</Swatch>
                  <Select $w={68} $ml={3}>Line<Caret /></Select>
                  <Select $w={37} $ml={3}>1<Caret /></Select>
                </ParamRow>
                <DecimalRow>
                  <DecimalLabel>Decimal point</DecimalLabel>
                  <Select $w={41}>4<Caret /></Select>
                </DecimalRow>
              </Group>
              <MaCol>
                <MaTitle>MA/Source Type</MaTitle>
                <CheckRow><CheckBox />Display Last Tick</CheckRow>
              </MaCol>
            </Sections>
            <DescRow>
              <DescBox>Value Line.</DescBox>
              <DescScroll>
                <ArrowUp $top={8} />
                <ArrowDown $bottom={8} />
              </DescScroll>
            </DescRow>
            <ActionRow>
              <Btn $w={55} $focus>&lt;&lt; Hide</Btn>
              <Btn $w={112} $h={22} $ml={117} $dim $pl={4}><GrayBars />Add to New Panel</Btn>
              <Btn $w={119} $h={22} $ml={7} $dim $pl={3}><GrayBars />Add to Active panel</Btn>
              <Btn $w={78} $h={22} $ml={6} $pl={5}><Ico><path d="M2 2l12 12M14 2L2 14" stroke="#222" strokeWidth="1.6" /></Ico>Remove</Btn>
            </ActionRow>
          </RightCol>
        </DialogBody>
      </Dialog>
    </Root>
  );
}
